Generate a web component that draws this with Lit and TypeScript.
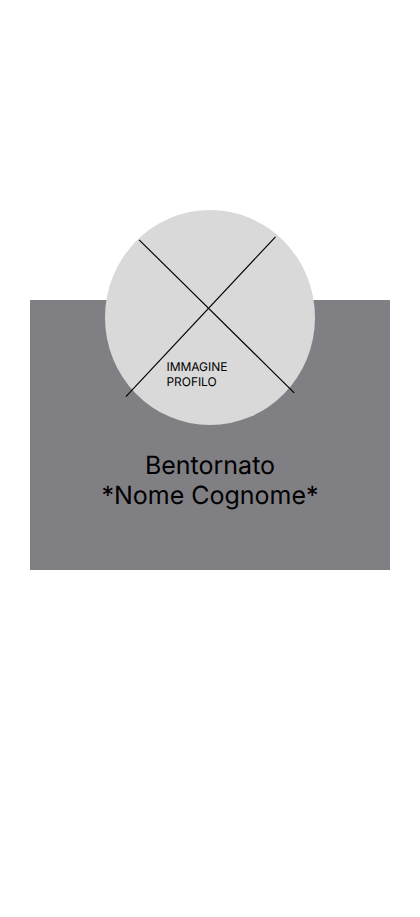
import { LitElement, html, css } from "lit";
import { customElement } from "lit/decorators.js";

@customElement("app-root")
export class AppRoot extends LitElement {
  static styles = css`
    :host {
      display: block;
      box-sizing: border-box;
      min-height: 917px;
      padding: 300px 30px 0;
      background: #ffffff;
      font-family: Inter, sans-serif;
      text-rendering: geometricPrecision;
      color: #000000;
    }
    .card {
      display: flex;
      flex-direction: column;
      align-items: center;
      height: 270px;
      background: #807f84;
    }
    .avatar {
      position: relative;
      flex: none;
      width: 210px;
      height: 215px;
      margin-top: -90px;
    }
    .avatar svg {
      display: block;
      overflow: visible;
    }
    .caption {
      position: absolute;
      left: 61.5px;
      top: 149px;
      font-size: 12px;
      line-height: 15px;
      letter-spacing: -0.05px;
    }
    .greeting {
      margin: 26px 0 0;
      font-size: 25px;
      font-weight: 400;
      line-height: 30px;
      text-align: center;
    }
  `;

  render() {
    return html`
      <section class="card">
        <div class="avatar">
          <svg width="210" height="215" viewBox="0 0 210 215">
            <ellipse cx="105" cy="107.5" rx="105" ry="107.5" fill="#d9d9d9" />
            <path d="M34.1 29.8 189.2 182.8M170.5 26.8 20.9 186.7" stroke="#000" stroke-width="1.15" fill="none" />
          </svg>
          <div class="caption">IMMAGINE<br />PROFILO</div>
        </div>
        <h1 class="greeting">Bentornato<br />*Nome Cognome*</h1>
      </section>
    `;
  }
}
